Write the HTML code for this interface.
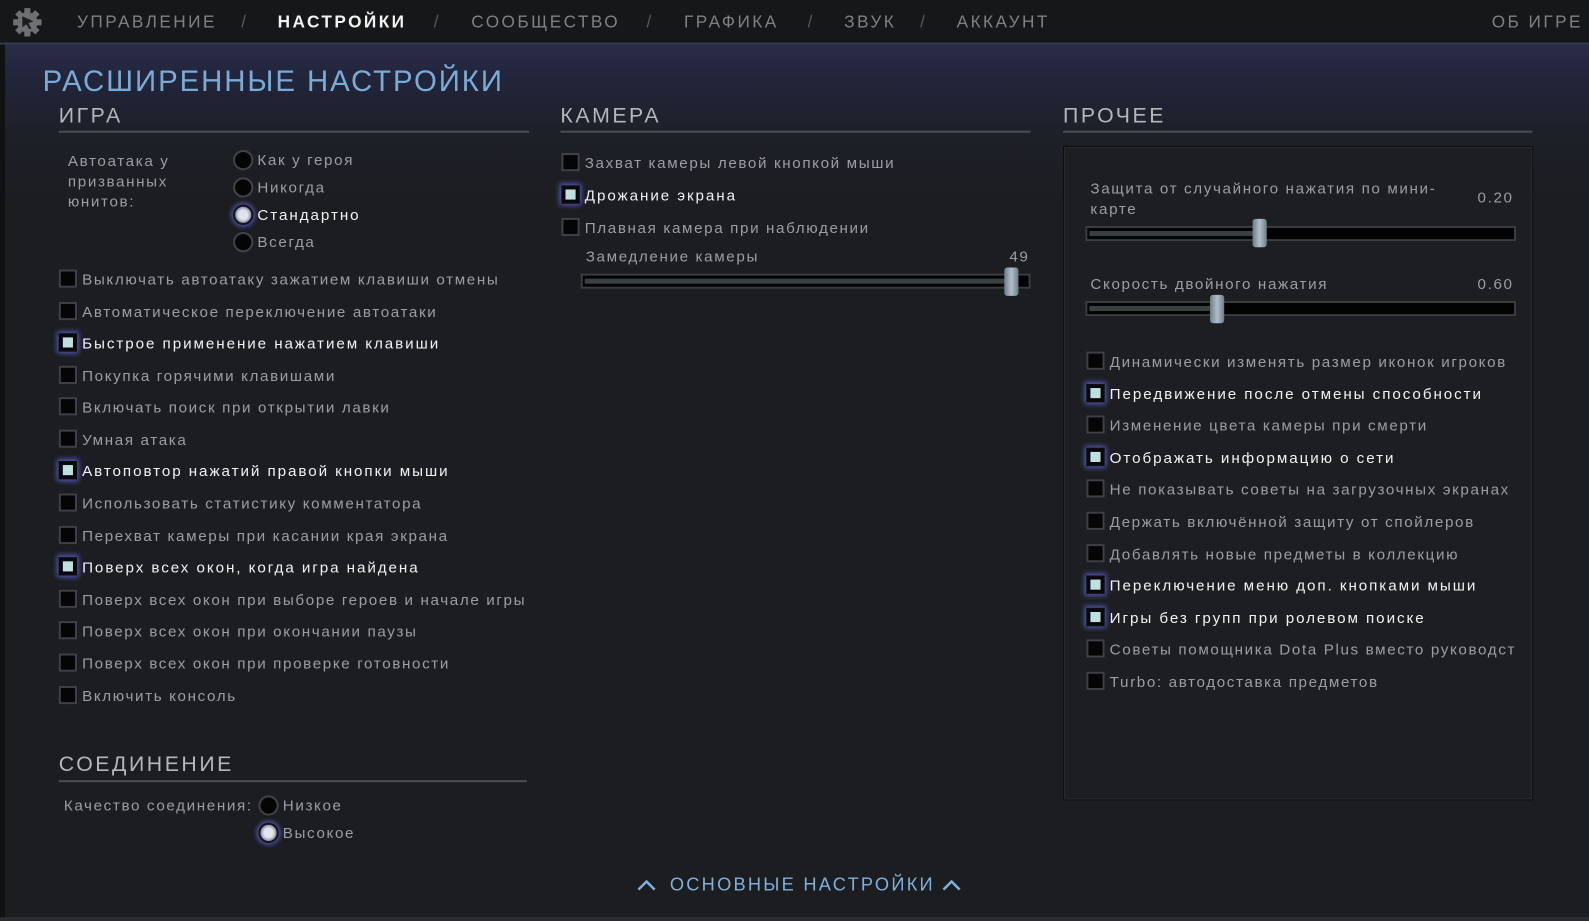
<!DOCTYPE html>
<html><head><meta charset="utf-8"><style>
html,body{margin:0;padding:0;width:1589px;height:921px;overflow:hidden;background:#1b1d21;}
#w{position:absolute;left:0;top:0;width:1568px;height:909px;transform:scale(1.0134,1.0132);transform-origin:0 0;
 font-family:"Liberation Sans","DejaVu Sans",sans-serif;color:#9a9ea3;font-size:15px;letter-spacing:1.6px;
 background:linear-gradient(180deg,#2a2b48 44px,#22243a 80px,#1e2028 130px,#1b1d21 200px);}
.a{position:absolute;white-space:nowrap;}
#top{position:absolute;left:0;top:0;width:1568px;height:42px;background:#161718;border-bottom:2px solid #2e3f55;}
.nav{position:absolute;top:12px;font-size:17px;letter-spacing:2.4px;color:#7d8084;}
.sl{color:#55585c;}
.h1{color:#78acd6;font-size:29px;letter-spacing:1.9px;left:42px;top:65px;}
.h2{color:#b4b7ba;font-size:21px;letter-spacing:2.5px;}
.ln{position:absolute;height:2px;background:#4a4d52;}
.cb{position:absolute;width:14px;height:14px;border:2px solid #3d4045;background:#050505;}
.cb.on{border-color:#0c0c10;box-shadow:0 0 5px 2px #5a5ac0;background:#050505;}
.cb.on::after{content:"";position:absolute;left:2px;top:2px;width:10px;height:10px;background:#bfe0e0;}
.t{position:absolute;white-space:nowrap;}
.t.on{color:#f0f2f4;letter-spacing:1.9px;}
.rd{position:absolute;width:16px;height:16px;border-radius:50%;border:2px solid #3f4246;background:#050505;}
.rd.on{background:radial-gradient(circle,#e0e4ec 40%,#8a90a0 70%);border-color:#151520;box-shadow:0 0 4px 2px #5050a0;}
.tr{position:absolute;height:11px;background:#030303;border:2px solid #3a3d40;}
.fill{position:absolute;left:2px;top:3px;height:5px;background:#384042;}
.th{position:absolute;width:14px;height:28px;border-radius:3px;background:linear-gradient(90deg,#6d7d88,#b0bec8,#6d7d88);}
</style></head><body><div id="w">
<div style="position:absolute;left:0;top:0;width:5px;height:909px;background:#101112"></div>
<div id="top"></div>
<svg class="a" style="left:12px;top:7px" width="30" height="30" viewBox="0 0 30 30"><g fill="#6e7174"><circle cx="15" cy="15" r="10"/><rect x="12" y="1" width="6" height="28"/><rect x="1" y="12" width="28" height="6"/><rect x="12" y="1" width="6" height="28" transform="rotate(45 15 15)"/><rect x="12" y="1" width="6" height="28" transform="rotate(-45 15 15)"/></g><path d="M10 9 L21 14 L16 16 L19 21 L17 22 L14 17 L10 20Z" fill="#1d1e20"/></svg>
<div class="nav" style="left:76px">УПРАВЛЕНИЕ</div>
<div class="nav sl" style="left:238px">/</div>
<div class="nav" style="left:274px;color:#f2f2f2;font-weight:bold">НАСТРОЙКИ</div>
<div class="nav sl" style="left:428px">/</div>
<div class="nav" style="left:465px">СООБЩЕСТВО</div>
<div class="nav sl" style="left:638px">/</div>
<div class="nav" style="left:675px">ГРАФИКА</div>
<div class="nav sl" style="left:797px">/</div>
<div class="nav" style="left:833px">ЗВУК</div>
<div class="nav sl" style="left:908px">/</div>
<div class="nav" style="left:944px">АККАУНТ</div>
<div class="nav" style="left:1472px">ОБ ИГРЕ</div>

<div class="a h1">РАСШИРЕННЫЕ НАСТРОЙКИ</div>
<div class="a h2" style="left:58px;top:103px">ИГРА</div><div class="ln" style="left:58px;top:129px;width:464px"></div>
<div class="a h2" style="left:553px;top:103px">КАМЕРА</div><div class="ln" style="left:553px;top:129px;width:464px"></div>
<div class="a h2" style="left:1049px;top:103px">ПРОЧЕЕ</div><div class="ln" style="left:1049px;top:129px;width:463px"></div>

<div class="t" style="left:67px;top:150px;line-height:20px;white-space:normal;width:120px">Автоатака у призванных юнитов:</div>
<div class="rd" style="left:230px;top:148px"></div><div class="t" style="left:254px;top:150px">Как у героя</div>
<div class="rd" style="left:230px;top:175px"></div><div class="t" style="left:254px;top:177px">Никогда</div>
<div class="rd on" style="left:230px;top:202px"></div><div class="t on" style="left:254px;top:204px">Стандартно</div>
<div class="rd" style="left:230px;top:229px"></div><div class="t" style="left:254px;top:231px">Всегда</div>

<div class="cb" style="left:58px;top:266px"></div><div class="t" style="left:81px;top:268px">Выключать автоатаку зажатием клавиши отмены</div>
<div class="cb" style="left:58px;top:298px"></div><div class="t" style="left:81px;top:300px">Автоматическое переключение автоатаки</div>
<div class="cb on" style="left:58px;top:329px"></div><div class="t on" style="left:81px;top:331px">Быстрое применение нажатием клавиши</div>
<div class="cb" style="left:58px;top:361px"></div><div class="t" style="left:81px;top:363px">Покупка горячими клавишами</div>
<div class="cb" style="left:58px;top:392px"></div><div class="t" style="left:81px;top:394px">Включать поиск при открытии лавки</div>
<div class="cb" style="left:58px;top:424px"></div><div class="t" style="left:81px;top:426px">Умная атака</div>
<div class="cb on" style="left:58px;top:455px"></div><div class="t on" style="left:81px;top:457px">Автоповтор нажатий правой кнопки мыши</div>
<div class="cb" style="left:58px;top:487px"></div><div class="t" style="left:81px;top:489px">Использовать статистику комментатора</div>
<div class="cb" style="left:58px;top:519px"></div><div class="t" style="left:81px;top:521px">Перехват камеры при касании края экрана</div>
<div class="cb on" style="left:58px;top:550px"></div><div class="t on" style="left:81px;top:552px">Поверх всех окон, когда игра найдена</div>
<div class="cb" style="left:58px;top:582px"></div><div class="t" style="left:81px;top:584px">Поверх всех окон при выборе героев и начале игры</div>
<div class="cb" style="left:58px;top:613px"></div><div class="t" style="left:81px;top:615px">Поверх всех окон при окончании паузы</div>
<div class="cb" style="left:58px;top:645px"></div><div class="t" style="left:81px;top:647px">Поверх всех окон при проверке готовности</div>
<div class="cb" style="left:58px;top:677px"></div><div class="t" style="left:81px;top:679px">Включить консоль</div>

<div class="a h2" style="left:58px;top:743px">СОЕДИНЕНИЕ</div><div class="ln" style="left:58px;top:770px;width:462px"></div>
<div class="t" style="left:63px;top:787px;letter-spacing:1.6px">Качество соединения:</div>
<div class="rd" style="left:255px;top:785px"></div><div class="t" style="left:279px;top:787px">Низкое</div>
<div class="rd on" style="left:255px;top:812px"></div><div class="t" style="left:279px;top:814px">Высокое</div>

<div class="cb" style="left:554px;top:151px"></div><div class="t" style="left:577px;top:153px">Захват камеры левой кнопкой мыши</div>
<div class="cb on" style="left:554px;top:183px"></div><div class="t on" style="left:577px;top:185px">Дрожание экрана</div>
<div class="cb" style="left:554px;top:215px"></div><div class="t" style="left:577px;top:217px">Плавная камера при наблюдении</div>
<div class="t" style="left:578px;top:245px">Замедление камеры</div><div class="t" style="left:996px;top:245px">49</div>
<div class="tr" style="left:573px;top:270px;width:440px"><div class="fill" style="width:420px"></div></div>
<div class="th" style="left:991px;top:264px"></div>

<div style="position:absolute;left:1049px;top:144px;width:462px;height:644px;background:#1c1e21;border:1px solid #0d0e10;box-shadow:inset 0 0 0 1px #2a2c30"></div>
<div class="t" style="left:1076px;top:177px;line-height:20px">Защита от случайного нажатия по мини-<br>карте</div>
<div class="t" style="left:1458px;top:187px">0.20</div>
<div class="tr" style="left:1071px;top:223px;width:421px"><div class="fill" style="width:165px"></div></div>
<div class="th" style="left:1236px;top:216px"></div>
<div class="t" style="left:1076px;top:272px">Скорость двойного нажатия</div><div class="t" style="left:1458px;top:272px">0.60</div>
<div class="tr" style="left:1071px;top:297px;width:421px"><div class="fill" style="width:123px"></div></div>
<div class="th" style="left:1194px;top:291px"></div>

<div class="cb" style="left:1072px;top:347px"></div><div class="t" style="left:1095px;top:349px;width:402px;overflow:hidden">Динамически изменять размер иконок игроков</div>
<div class="cb on" style="left:1072px;top:379px"></div><div class="t on" style="left:1095px;top:381px">Передвижение после отмены способности</div>
<div class="cb" style="left:1072px;top:410px"></div><div class="t" style="left:1095px;top:412px">Изменение цвета камеры при смерти</div>
<div class="cb on" style="left:1072px;top:442px"></div><div class="t on" style="left:1095px;top:444px">Отображать информацию о сети</div>
<div class="cb" style="left:1072px;top:473px"></div><div class="t" style="left:1095px;top:475px;width:402px;overflow:hidden">Не показывать советы на загрузочных экранах</div>
<div class="cb" style="left:1072px;top:505px"></div><div class="t" style="left:1095px;top:507px">Держать включённой защиту от спойлеров</div>
<div class="cb" style="left:1072px;top:537px"></div><div class="t" style="left:1095px;top:539px">Добавлять новые предметы в коллекцию</div>
<div class="cb on" style="left:1072px;top:568px"></div><div class="t on" style="left:1095px;top:570px">Переключение меню доп. кнопками мыши</div>
<div class="cb on" style="left:1072px;top:600px"></div><div class="t on" style="left:1095px;top:602px">Игры без групп при ролевом поиске</div>
<div class="cb" style="left:1072px;top:631px"></div><div class="t" style="left:1095px;top:633px;width:400px;overflow:hidden">Советы помощника Dota Plus вместо руководства</div>
<div class="cb" style="left:1072px;top:663px"></div><div class="t" style="left:1095px;top:665px">Turbo: автодоставка предметов</div>

<svg class="a" style="left:628px;top:866px" width="20" height="14" viewBox="0 0 20 14"><path d="M2 12 L10 4 L18 12" fill="none" stroke="#7fb0dc" stroke-width="2.5"/></svg>
<div class="t" style="left:661px;top:863px;color:#7fb0dc;font-size:18px;letter-spacing:2.2px">ОСНОВНЫЕ НАСТРОЙКИ</div>
<svg class="a" style="left:929px;top:866px" width="20" height="14" viewBox="0 0 20 14"><path d="M2 12 L10 4 L18 12" fill="none" stroke="#7fb0dc" stroke-width="2.5"/></svg>
<div style="position:absolute;left:0;top:905px;width:1568px;height:4px;background:#2a2c2f"></div>
</div></body></html>
